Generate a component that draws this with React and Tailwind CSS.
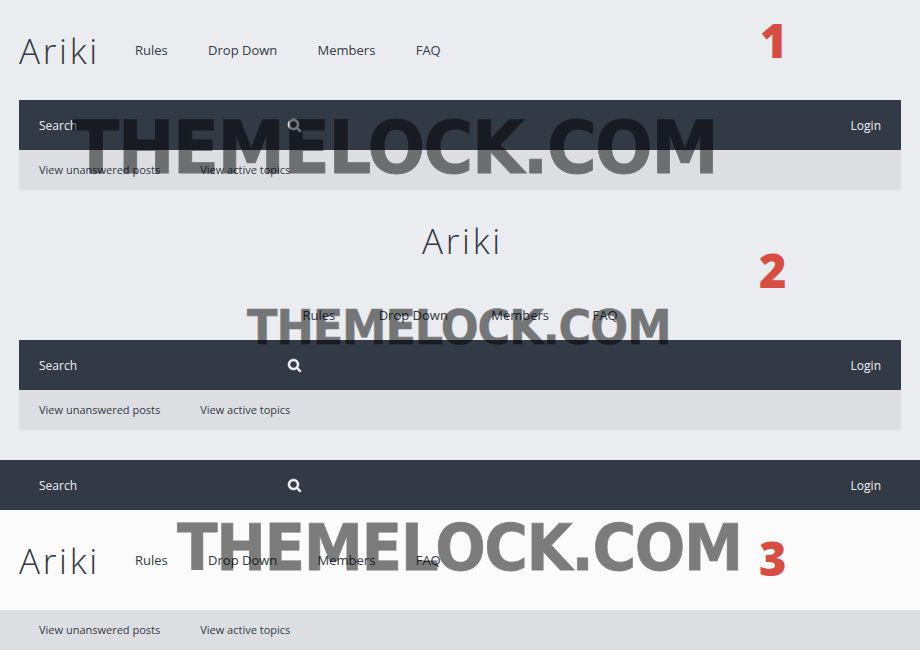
import React from "react";

const NAV = ["Rules", "Drop Down", "Members", "FAQ"];

function Logo() {
  return (
    <span className="text-[35px] leading-[50px] font-light tracking-[2.7px] whitespace-nowrap">Ariki</span>
  );
}

function Nav({ className }) {
  return (
    <nav className={`flex text-[13px] leading-5 ${className}`}>
      {NAV.map((n) => (
        <a key={n} className="whitespace-nowrap">{n}</a>
      ))}
    </nav>
  );
}

function SearchBar({ className = "px-5" }) {
  return (
    <div className={`flex h-[50px] items-center justify-between bg-[#323a45] text-[12px] leading-5 text-[#eeeff2] ${className}`}>
      <div className="flex w-[262px] items-center justify-between">
        <span className="pt-0.5">Search</span>
        <svg viewBox="0 0 1664 1664" className="h-[13px] w-[13px] overflow-visible" fill="currentColor" stroke="currentColor" strokeWidth="70">
          <path d="M1152 704q0-185-131.500-316.500T704 256 387.500 387.500 256 704t131.500 316.500T704 1152t316.500-131.500T1152 704zm512 832q0 52-38 90t-90 38q-54 0-90-38l-343-342q-179 124-399 124-143 0-273.500-55.500t-225-150-150-225T0 704t55.500-273.500 150-225 225-150T704 0t273.500 55.500 225 150 150 225T1408 704q0 220-124 399l343 343q37 37 37 90z" />
        </svg>
      </div>
      <span className="pt-0.5">Login</span>
    </div>
  );
}

function LinksBar({ className = "px-5" }) {
  return (
    <div className={`flex h-10 items-center gap-10 bg-[#dddee2] text-[11px] leading-5 ${className}`}>
      <a>View unanswered posts</a>
      <a>View active topics</a>
    </div>
  );
}

function Badge({ children, className }) {
  return (
    <span className={`absolute text-[47px] leading-[60px] font-extrabold text-[#d64d43] ${className}`}>
      {children}
    </span>
  );
}

function Watermark({ className }) {
  return (
    <div className={`pointer-events-none absolute origin-left scale-x-93 leading-none font-bold tracking-[-0.024em] whitespace-nowrap text-black opacity-50 [-webkit-text-stroke:0.012em_black] [font-family:'DejaVu_Sans',sans-serif] ${className}`}>
      THEMELOCK.COM
    </div>
  );
}

export default function App() {
  return (
    <div className="relative h-[650px] w-[920px] overflow-hidden bg-[#ebecf0] text-[#323a45] [font-family:'Open_Sans',sans-serif]">
      <section className="px-[19px]">
        <header className="flex h-[100px] items-center">
          <div className="flex w-[116px] pt-0.5"><Logo /></div>
          <Nav className="gap-[40.3px]" />
        </header>
        <SearchBar />
        <LinksBar />
      </section>

      <section className="px-[19px] pb-[30px]">
        <header className="flex h-[150px] flex-col items-center justify-between pt-[26px] pb-[15px]">
          <div className="flex pl-[5px]"><Logo /></div>
          <Nav className="gap-[43.4px]" />
        </header>
        <SearchBar />
        <LinksBar />
      </section>

      <section>
        <SearchBar className="px-[39px]" />
        <header className="flex h-[100px] items-center bg-[#fbfbfb] px-[19px]">
          <div className="flex w-[116px] pt-0.5"><Logo /></div>
          <Nav className="gap-[40.3px]" />
        </header>
        <LinksBar className="px-[39px]" />
      </section>

      <Badge className="top-[10px] left-[760px]">1</Badge>
      <Badge className="top-[240px] left-[759px]">2</Badge>
      <Badge className="top-[528px] left-[759px]">3</Badge>

      <Watermark className="top-[111px] left-[73px] text-[73px]" />
      <Watermark className="top-[303px] left-[247px] text-[48px]" />
      <Watermark className="top-[516px] left-[177px] text-[64px]" />
    </div>
  );
}
